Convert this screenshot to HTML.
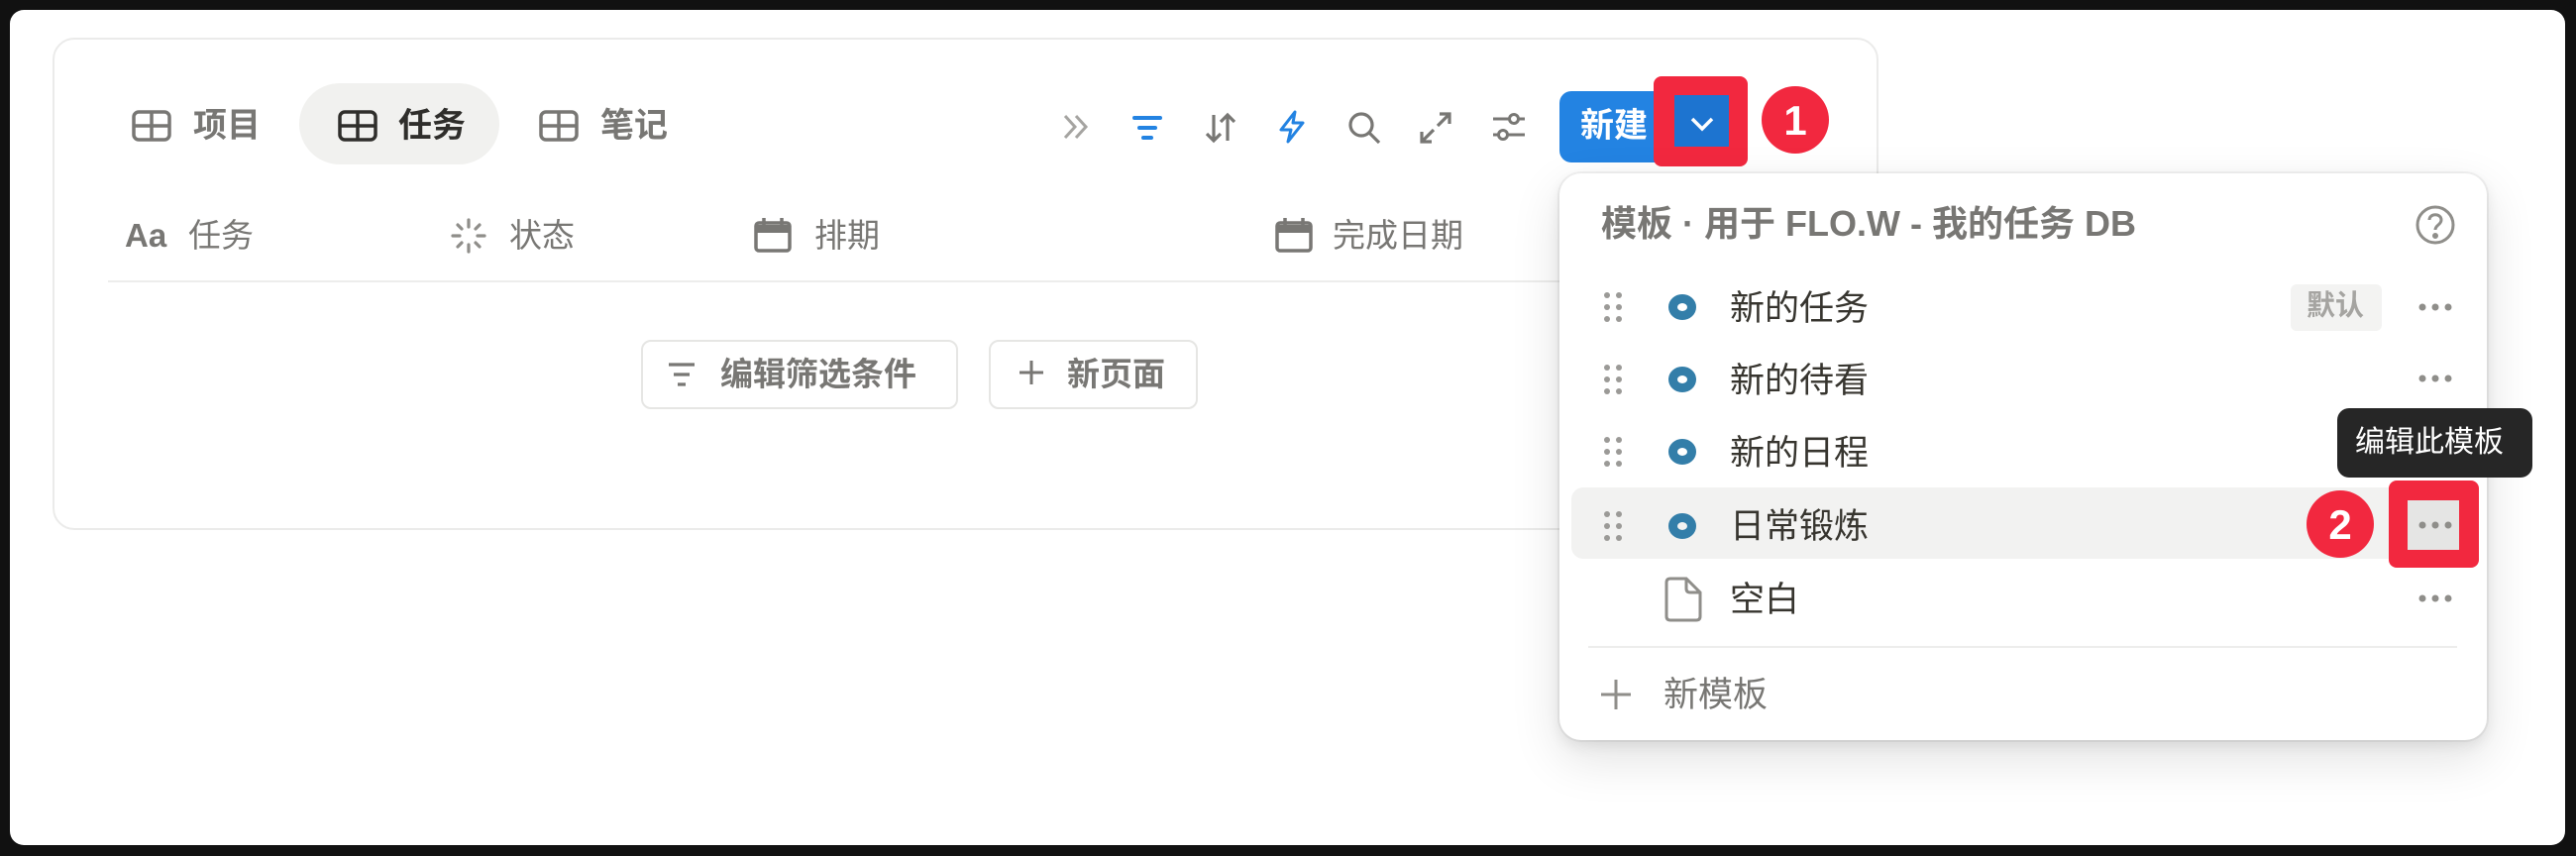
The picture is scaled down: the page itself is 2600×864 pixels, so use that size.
<!DOCTYPE html>
<html><head><meta charset="utf-8"><style>
*{margin:0;padding:0;box-sizing:border-box}
body{width:2600px;height:864px;background:#111;position:relative;overflow:hidden;font-family:"Liberation Sans","Noto Sans CJK SC",sans-serif;color:#37352f}
.a{position:absolute}
.page{left:10px;top:10px;width:2579px;height:843px;background:#fff;border-radius:14px}
.card{left:53px;top:38px;width:1843px;height:497px;border:2px solid #ebebea;border-radius:22px}
.t{position:absolute;white-space:nowrap;line-height:1}
.g{color:#787774}
.pop{left:1574px;top:175px;width:936px;height:572px;background:#fff;border-radius:22px;box-shadow:0 0 0 2px rgba(15,15,15,.05),0 6px 14px rgba(15,15,15,.08),0 18px 50px rgba(15,15,15,.12)}
svg{position:absolute;overflow:visible}
</style></head><body>
<div class="a page"></div>
<div class="a card"></div>

<div class="a" style="left:302px;top:84px;width:202px;height:82px;border-radius:41px;background:#f1f1ef"></div>
<svg style="left:133px;top:111px" width="40" height="32" viewBox="0 0 40 32" fill="none" stroke="#787774" stroke-width="3.5"><rect x="2" y="2" width="36" height="28" rx="5"/><path d="M2 16H38M20 2V30"/></svg>
<div class="t g" style="left:195px;top:110px;font-size:34px;font-weight:bold">项目</div>
<svg style="left:341px;top:111px" width="40" height="32" viewBox="0 0 40 32" fill="none" stroke="#2f2e2b" stroke-width="3.5"><rect x="2" y="2" width="36" height="28" rx="5"/><path d="M2 16H38M20 2V30"/></svg>
<div class="t" style="left:402px;top:110px;font-size:34px;font-weight:bold;color:#2f2e2b">任务</div>
<svg style="left:544px;top:111px" width="40" height="32" viewBox="0 0 40 32" fill="none" stroke="#787774" stroke-width="3.5"><rect x="2" y="2" width="36" height="28" rx="5"/><path d="M2 16H38M20 2V30"/></svg>
<div class="t g" style="left:606px;top:110px;font-size:34px;font-weight:bold">笔记</div>

<svg style="left:1072px;top:114px" width="28" height="28" viewBox="0 0 28 28" fill="none" stroke="#a5a4a1" stroke-width="3"><path d="M3 3L13 14L3 25M14 3L24 14L14 25"/></svg>
<svg style="left:1142px;top:115px" width="32" height="28" viewBox="0 0 32 28" fill="none" stroke="#2383e2" stroke-width="4" stroke-linecap="round"><path d="M3 4H29M8 14H24M12 24H20"/></svg>
<svg style="left:1215px;top:112px" width="34" height="34" viewBox="0 0 34 34" fill="none" stroke="#787774" stroke-width="3.2"><path d="M10 4V30M3 23L10 30L17 23M24 30V4M17 11L24 4L31 11"/></svg>
<svg style="left:1290px;top:111px" width="28" height="34" viewBox="0 0 28 34" fill="none" stroke="#2383e2" stroke-width="3" stroke-linejoin="round"><path d="M17 2L3 20H13L10 32L25 13H15Z"/></svg>
<svg style="left:1360px;top:112px" width="34" height="34" viewBox="0 0 34 34" fill="none" stroke="#787774" stroke-width="3.2"><circle cx="14" cy="14" r="11"/><path d="M22 22L32 32"/></svg>
<svg style="left:1433px;top:113px" width="32" height="32" viewBox="0 0 32 32" fill="none" stroke="#787774" stroke-width="3.2"><path d="M18 14L30 2M20 2H30V12M14 18L2 30M2 20V30H12"/></svg>
<svg style="left:1505px;top:113px" width="34" height="30" viewBox="0 0 34 30" fill="none" stroke="#787774" stroke-width="3"><path d="M2 7H34M2 23H34"/><circle cx="23" cy="7" r="4.5" fill="#fff"/><circle cx="12" cy="23" r="4.5" fill="#fff"/></svg>

<div class="a" style="left:1574px;top:92px;width:130px;height:72px;background:#2383e2;border-radius:12px"></div>
<div class="t" style="left:1595px;top:110px;font-size:34px;font-weight:bold;color:#fff">新建</div>
<div class="a" style="left:1669px;top:77px;width:95px;height:91px;background:#f2283f;border-radius:8px"></div>
<div class="a" style="left:1690px;top:96px;width:55px;height:52px;background:#1d74d0"></div>
<svg style="left:1705px;top:117px" width="26" height="16" viewBox="0 0 26 16" fill="none" stroke="#fff" stroke-width="3.5"><path d="M3 3L13 13L23 3"/></svg>
<div class="a" style="left:1778px;top:87px;width:68px;height:68px;border-radius:50%;background:#f2283f"></div>
<div class="t" style="left:1778px;top:101px;width:68px;text-align:center;font-size:42px;font-weight:bold;color:#fff">1</div>

<div class="t g" style="left:126px;top:221px;font-size:33px;font-weight:bold">Aa</div>
<div class="t g" style="left:190px;top:221px;font-size:33px">任务</div>
<svg style="left:455px;top:220px" width="36" height="36" viewBox="0 0 36 36" stroke="#8f8e8a" stroke-width="3.2" stroke-linecap="round"><path d="M18 2V9M18 27V34M2 18H9M27 18H34M7 7L11 11M25 25L29 29M29 7L25 11M11 25L7 29"/></svg>
<div class="t g" style="left:514px;top:221px;font-size:33px">状态</div>
<svg style="left:761px;top:219px" width="38" height="36" viewBox="0 0 38 36" fill="none" stroke="#787774" stroke-width="3.5"><rect x="2" y="6" width="34" height="28" rx="3"/><path d="M2 12H36" stroke-width="8"/><path d="M10 1V8M28 1V8"/></svg>
<div class="t g" style="left:822px;top:221px;font-size:33px">排期</div>
<svg style="left:1287px;top:219px" width="38" height="36" viewBox="0 0 38 36" fill="none" stroke="#787774" stroke-width="3.5"><rect x="2" y="6" width="34" height="28" rx="3"/><path d="M2 12H36" stroke-width="8"/><path d="M10 1V8M28 1V8"/></svg>
<div class="t g" style="left:1345px;top:221px;font-size:33px">完成日期</div>
<div class="a" style="left:109px;top:283px;width:1786px;height:2px;background:#ededec"></div>

<div class="a" style="left:647px;top:343px;width:320px;height:70px;border:2px solid #e6e6e4;border-radius:10px"></div>
<svg style="left:672px;top:364px" width="32" height="28" viewBox="0 0 32 28" fill="none" stroke="#787774" stroke-width="3.2"><path d="M3 4H29M8 14H24M12 24H20"/></svg>
<div class="t g" style="left:727px;top:361px;font-size:33px;font-weight:bold">编辑筛选条件</div>
<div class="a" style="left:998px;top:343px;width:211px;height:70px;border:2px solid #e6e6e4;border-radius:10px"></div>
<svg style="left:1027px;top:362px" width="28" height="28" viewBox="0 0 28 28" stroke="#787774" stroke-width="3"><path d="M14 2V26M2 14H26"/></svg>
<div class="t g" style="left:1077px;top:361px;font-size:33px;font-weight:bold">新页面</div>

<div class="a pop"></div>
<div class="t g" style="left:1616px;top:208px;font-size:36px;font-weight:bold">模板 · 用于 FLO.W - 我的任务 DB</div>
<svg style="left:2438px;top:207px" width="40" height="40" viewBox="0 0 40 40" fill="none" stroke="#8f8e8a" stroke-width="3"><circle cx="20" cy="20" r="18"/><path d="M14 15C14 8 26 8 26 15C26 20 20 20 20 25"/><circle cx="20" cy="31" r="1.5" fill="#8f8e8a"/></svg>

<div class="a" style="left:1586px;top:492px;width:914px;height:72px;background:#f2f2f1;border-radius:12px"></div>

<svg style="left:1618px;top:294px" width="20" height="300" viewBox="0 0 20 300" fill="#9b9a97">
<g><circle cx="4" cy="4" r="3"/><circle cx="16" cy="4" r="3"/><circle cx="4" cy="16" r="3"/><circle cx="16" cy="16" r="3"/><circle cx="4" cy="28" r="3"/><circle cx="16" cy="28" r="3"/></g>
<g transform="translate(0,73)"><circle cx="4" cy="4" r="3"/><circle cx="16" cy="4" r="3"/><circle cx="4" cy="16" r="3"/><circle cx="16" cy="16" r="3"/><circle cx="4" cy="28" r="3"/><circle cx="16" cy="28" r="3"/></g>
<g transform="translate(0,146)"><circle cx="4" cy="4" r="3"/><circle cx="16" cy="4" r="3"/><circle cx="4" cy="16" r="3"/><circle cx="16" cy="16" r="3"/><circle cx="4" cy="28" r="3"/><circle cx="16" cy="28" r="3"/></g>
<g transform="translate(0,221)"><circle cx="4" cy="4" r="3"/><circle cx="16" cy="4" r="3"/><circle cx="4" cy="16" r="3"/><circle cx="16" cy="16" r="3"/><circle cx="4" cy="28" r="3"/><circle cx="16" cy="28" r="3"/></g>
</svg>
<svg style="left:1684px;top:297px" width="28" height="300" viewBox="0 0 28 300" fill="none" stroke="#337ea9" stroke-width="9">
<ellipse cx="14" cy="13" rx="9.5" ry="8.5"/><ellipse cx="14" cy="86" rx="9.5" ry="8.5"/><ellipse cx="14" cy="159" rx="9.5" ry="8.5"/><ellipse cx="14" cy="234" rx="9.5" ry="8.5"/></svg>
<svg style="left:1680px;top:582px" width="38" height="46" viewBox="0 0 38 46" fill="none" stroke="#8f8e8a" stroke-width="3"><path d="M6 2H22L36 16V40Q36 44 32 44H6Q2 44 2 40V6Q2 2 6 2Z"/><path d="M22 2V12Q22 16 26 16H36"/></svg>

<div class="t" style="left:1746px;top:294px;font-size:35px">新的任务</div>
<div class="t" style="left:1746px;top:367px;font-size:35px">新的待看</div>
<div class="t" style="left:1746px;top:440px;font-size:35px">新的日程</div>
<div class="t" style="left:1746px;top:514px;font-size:35px">日常锻炼</div>
<div class="t" style="left:1746px;top:588px;font-size:35px">空白</div>

<div class="a" style="left:2312px;top:287px;width:92px;height:47px;background:#f3f3f2;border-radius:6px"></div>
<div class="t" style="left:2328px;top:295px;font-size:29px;font-weight:bold;color:#a5a4a1">默认</div>

<svg style="left:2440px;top:300px" width="36" height="320" viewBox="0 0 36 320" fill="#8f8e8a">
<circle cx="5" cy="10" r="3.5"/><circle cx="18" cy="10" r="3.5"/><circle cx="31" cy="10" r="3.5"/>
<circle cx="5" cy="82" r="3.5"/><circle cx="18" cy="82" r="3.5"/><circle cx="31" cy="82" r="3.5"/>
<circle cx="5" cy="304" r="3.5"/><circle cx="18" cy="304" r="3.5"/><circle cx="31" cy="304" r="3.5"/></svg>

<div class="a" style="left:2359px;top:412px;width:197px;height:70px;background:#262626;border-radius:12px"></div>
<div class="t" style="left:2377px;top:432px;font-size:30px;color:#fff">编辑此模板</div>

<div class="a" style="left:2411px;top:485px;width:91px;height:88px;background:#f2283f;border-radius:8px"></div>
<div class="a" style="left:2430px;top:505px;width:52px;height:50px;background:#e5e5e4"></div>
<svg style="left:2440px;top:525px" width="36" height="10" viewBox="0 0 36 10" fill="#8f8e8a"><circle cx="5" cy="5" r="3.5"/><circle cx="18" cy="5" r="3.5"/><circle cx="31" cy="5" r="3.5"/></svg>
<div class="a" style="left:2328px;top:495px;width:68px;height:68px;border-radius:50%;background:#f2283f"></div>
<div class="t" style="left:2328px;top:509px;width:68px;text-align:center;font-size:42px;font-weight:bold;color:#fff">2</div>

<div class="a" style="left:1603px;top:652px;width:877px;height:2px;background:#ededec"></div>
<svg style="left:1614px;top:684px" width="34" height="34" viewBox="0 0 34 34" stroke="#8f8e8a" stroke-width="3"><path d="M17 2V32M2 17H32"/></svg>
<div class="t g" style="left:1679px;top:684px;font-size:35px">新模板</div>
</body></html>
